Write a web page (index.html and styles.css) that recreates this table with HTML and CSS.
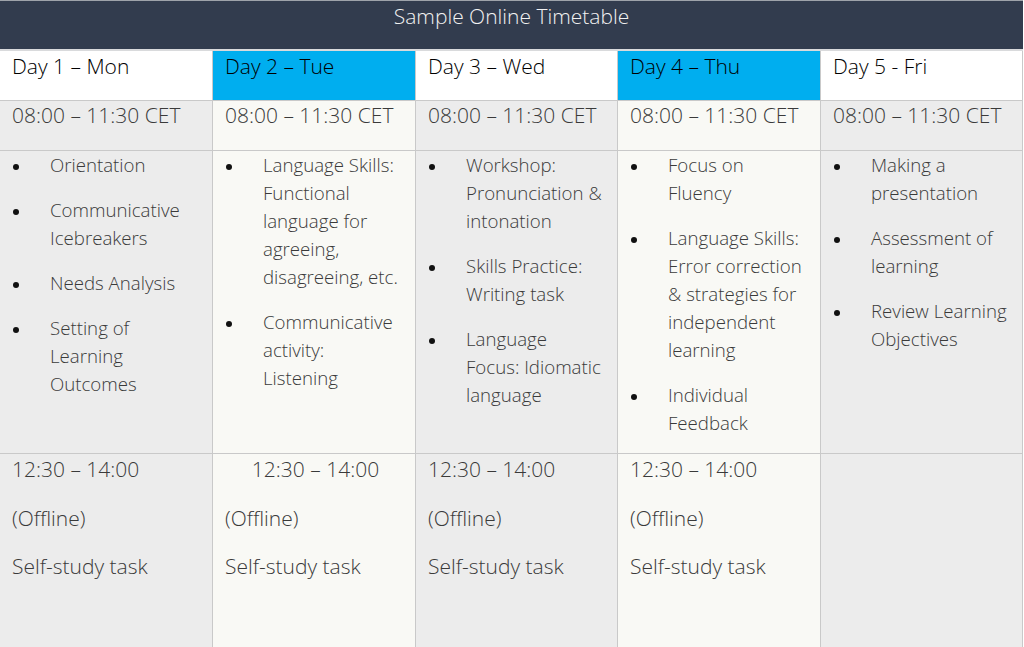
FILE: index.html
```html
<!DOCTYPE html>
<html lang="en">
<head>
<meta charset="utf-8">
<title>Sample Online Timetable</title>
<link rel="stylesheet" href="styles.css">
</head>
<body>
<div class="timetable">
  <div class="title">Sample Online Timetable</div>
  <div class="grid">
    <div class="cell head">Day 1 – Mon</div>
    <div class="cell head accent">Day 2 – Tue</div>
    <div class="cell head">Day 3 – Wed</div>
    <div class="cell head accent">Day 4 – Thu</div>
    <div class="cell head">Day 5 - Fri</div>

    <div class="cell time gray">08:00 – 11:30 CET</div>
    <div class="cell time light">08:00 – 11:30 CET</div>
    <div class="cell time gray">08:00 – 11:30 CET</div>
    <div class="cell time light">08:00 – 11:30 CET</div>
    <div class="cell time gray">08:00 – 11:30 CET</div>

    <div class="cell acts gray">
      <ul>
        <li>Orientation</li>
        <li>Communicative Icebreakers</li>
        <li>Needs Analysis</li>
        <li>Setting of Learning Outcomes</li>
      </ul>
    </div>
    <div class="cell acts light">
      <ul>
        <li>Language Skills: Functional language for agreeing, disagreeing, etc.</li>
        <li>Communicative activity: Listening</li>
      </ul>
    </div>
    <div class="cell acts gray">
      <ul>
        <li>Workshop: Pronunciation &amp; intonation</li>
        <li>Skills Practice: Writing task</li>
        <li>Language Focus: Idiomatic language</li>
      </ul>
    </div>
    <div class="cell acts light">
      <ul>
        <li>Focus on Fluency</li>
        <li>Language Skills: Error correction &amp; strategies for independent learning</li>
        <li>Individual Feedback</li>
      </ul>
    </div>
    <div class="cell acts gray">
      <ul>
        <li>Making a presentation</li>
        <li>Assessment of learning</li>
        <li>Review Learning Objectives</li>
      </ul>
    </div>

    <div class="cell pm gray">
      <p>12:30 – 14:00</p>
      <p>(Offline)</p>
      <p>Self-study task</p>
    </div>
    <div class="cell pm light">
      <p class="center">12:30 – 14:00</p>
      <p>(Offline)</p>
      <p>Self-study task</p>
    </div>
    <div class="cell pm gray">
      <p>12:30 – 14:00</p>
      <p>(Offline)</p>
      <p>Self-study task</p>
    </div>
    <div class="cell pm light">
      <p>12:30 – 14:00</p>
      <p>(Offline)</p>
      <p>Self-study task</p>
    </div>
    <div class="cell pm gray"></div>
  </div>
</div>
</body>
</html>
```

FILE: styles.css
```css
html, body {
  margin: 0;
  padding: 0;
  background: #ffffff;
}

body {
  font-family: "Open Sans", "Liberation Sans", sans-serif;
  color: #3a3a3a;
  height: 647px;
  overflow: hidden;
}

.timetable {
  width: 1023px;
}

.title {
  height: 51px;
  box-sizing: border-box;
  border-top: 1px solid #9ea3aa;
  border-bottom: 2px solid #d9dadc;
  background: #323c4e;
  color: #f2f2f2;
  font-size: 21px;
  font-weight: 300;
  line-height: 28px;
  text-align: center;
  padding-top: 1px;
}

.grid {
  display: grid;
  grid-template-columns: 213px 203px 202px 203px 202px;
  grid-template-rows: 50px 50px 303px 200px;
}

.cell {
  box-sizing: border-box;
  border-right: 1px solid #c9c9c9;
  border-bottom: 1px solid #c9c9c9;
  padding: 0 14px 0 12px;
}

.head {
  background: #ffffff;
  color: #000;
  font-size: 21px;
  font-weight: 300;
  line-height: 28px;
  padding-top: 1px;
}

.head.accent {
  background: #00aeef;
}

.gray {
  background: #ececec;
}

.light {
  background: #f9f9f5;
}

.time {
  font-size: 21px;
  font-weight: 300;
  line-height: 28px;
  padding-top: 0;
}

.acts ul {
  list-style: none;
  margin: 0;
  padding: 0;
}

.acts li {
  display: grid;
  grid-template-columns: 38px 1fr;
  font-size: 18.67px;
  font-weight: 300;
  line-height: 28px;
  margin-bottom: 17px;
}

.acts li::before {
  content: "";
  display: block;
  width: 6px;
  height: 6px;
  border-radius: 50%;
  background: #111;
  margin-top: 13px;
  margin-left: 1px;
}

.pm {
  font-size: 21px;
  font-weight: 300;
  line-height: 28px;
  padding-top: 1px;
}

.pm p {
  margin: 0 0 20.5px 0;
}

.pm p.center {
  text-align: center;
  padding-left: 5px;
}
```
